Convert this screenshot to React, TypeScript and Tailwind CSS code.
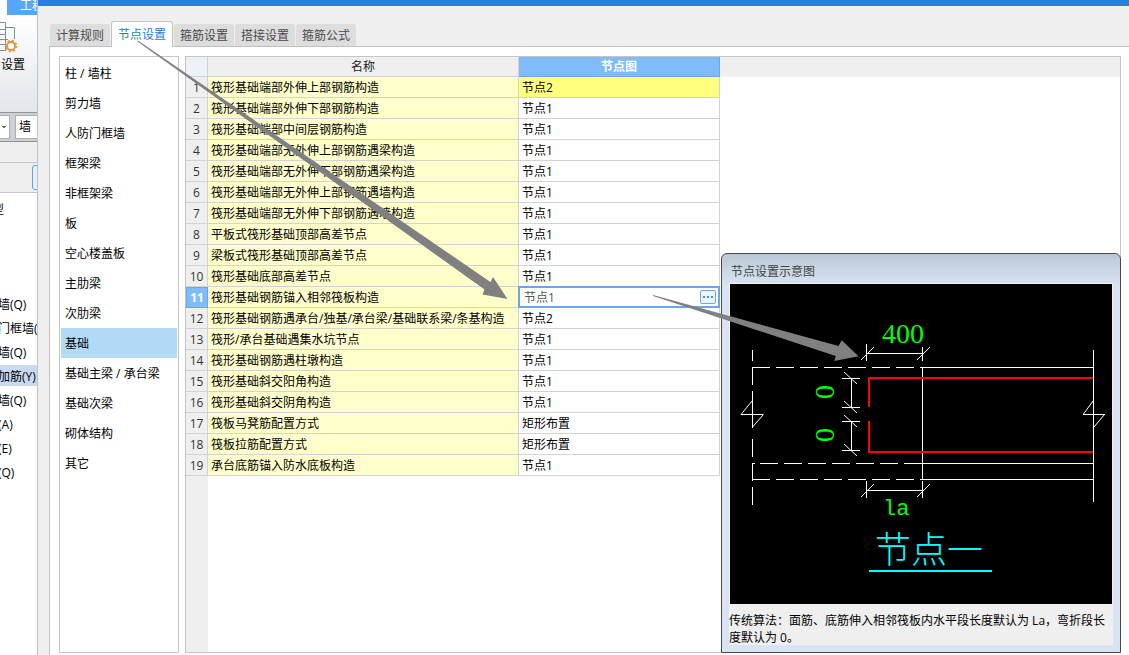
import React from "react";
import { ChevronDown } from "lucide-react";

const tabs = ["计算规则", "节点设置", "箍筋设置", "搭接设置", "箍筋公式"];

const categories = [
  "柱 / 墙柱",
  "剪力墙",
  "人防门框墙",
  "框架梁",
  "非框架梁",
  "板",
  "空心楼盖板",
  "主肋梁",
  "次肋梁",
  "基础",
  "基础主梁 / 承台梁",
  "基础次梁",
  "砌体结构",
  "其它",
];

const rows: [string, string][] = [
  ["筏形基础端部外伸上部钢筋构造", "节点2"],
  ["筏形基础端部外伸下部钢筋构造", "节点1"],
  ["筏形基础端部中间层钢筋构造", "节点1"],
  ["筏形基础端部无外伸上部钢筋遇梁构造", "节点1"],
  ["筏形基础端部无外伸下部钢筋遇梁构造", "节点1"],
  ["筏形基础端部无外伸上部钢筋遇墙构造", "节点1"],
  ["筏形基础端部无外伸下部钢筋遇墙构造", "节点1"],
  ["平板式筏形基础顶部高差节点", "节点1"],
  ["梁板式筏形基础顶部高差节点", "节点1"],
  ["筏形基础底部高差节点", "节点1"],
  ["筏形基础钢筋锚入相邻筏板构造", "节点1"],
  ["筏形基础钢筋遇承台/独基/承台梁/基础联系梁/条基构造", "节点2"],
  ["筏形/承台基础遇集水坑节点", "节点1"],
  ["筏形基础钢筋遇柱墩构造", "节点1"],
  ["筏形基础斜交阳角构造", "节点1"],
  ["筏形基础斜交阴角构造", "节点1"],
  ["筏板马凳筋配置方式", "矩形布置"],
  ["筏板拉筋配置方式", "矩形布置"],
  ["承台底筋锚入防水底板构造", "节点1"],
];

const components = ["墙(Q)", "门框墙(", "墙(Q)", "加筋(Y)", "墙(Q)", "(A)", "(E)", "(Q)"];

function SettingsIcon() {
  return (
    <svg className="block" width="18" height="32" viewBox="0 0 18 32" fill="none">
      <path d="M0 1.5H5.5V29.5H0M0 8.5H5.5M0 13.5H5.5M0 18.5H5.5M0 23.5H5.5M5.5 6.5H14.5V18M5.5 18.5H8" stroke="#7f8f96" />
      <circle cx="11" cy="25" r="5.4" stroke="#e8903a" strokeWidth="1.6" strokeDasharray="2.12 2.12" />
      <circle cx="11" cy="25" r="4" fill="#fff" stroke="#e8903a" strokeWidth="1.8" />
    </svg>
  );
}

function MainWindow() {
  return (
    <aside className="flex w-[37px] shrink-0 flex-col overflow-hidden whitespace-nowrap bg-white">
      <div className="flex h-[15px] shrink-0 pl-[7px]">
        <div className="flex h-full flex-1 items-end overflow-hidden bg-[#58a6f9] pl-[13px] leading-[18px] text-white">
          工程
        </div>
      </div>
      <div className="flex h-[98px] shrink-0 flex-col border-b border-[#8f949b] bg-linear-to-b from-white to-[#e2e6ea] pt-[6px]">
        <SettingsIcon />
        <span className="mt-[3px] pl-px leading-[18px]">设置</span>
      </div>
      <div className="flex h-[29px] shrink-0 items-center gap-[5px] border-b border-[#8f949b] bg-[#cdd1d6]">
        <button
          aria-label="展开"
          className="flex h-[24px] w-[10px] shrink-0 items-center border border-l-0 border-[#a9afb8] bg-white"
        >
          <ChevronDown size={8} fill="#555" className="text-[#555]" />
        </button>
        <select
          aria-label="构件类型"
          className="h-[24px] w-[40px] shrink-0 appearance-none border border-[#a9afb8] bg-white pl-[3px]"
        >
          <option>墙</option>
        </select>
      </div>
      <div className="h-[21px] shrink-0 border-b border-[#c2c6cf] bg-[#efefef]" />
      <div className="flex h-[30px] shrink-0 items-center border-b border-[#c2c6cf] bg-[#efefef] pl-[32px]">
        <button aria-label="新建" className="h-[25px] w-[24px] shrink-0 rounded-[3px] border border-[#58a6f9] bg-[#e9f2fc]" />
      </div>
      <div className="-ml-[8px] mt-[8px] h-[92px] leading-[18px]">型</div>
      <ul>
        {components.map((c, i) => (
          <li key={i} className="h-[24px]">
            <button
              className={"block h-[21px] w-full pt-[2px] text-left leading-[19px] " + (i === 3 ? "bg-[#c9d9f1]" : "")}
            >
              <span className="-ml-[2px]">{c}</span>
            </button>
          </li>
        ))}
      </ul>
    </aside>
  );
}

function Tabs() {
  return (
    <div role="tablist" className="relative flex items-end gap-px pl-[12px] pt-[15px]">
      {tabs.map((t, i) => (
        <button
          key={t}
          role="tab"
          aria-selected={i === 1}
          className={
            i === 1
              ? "-mb-px h-[26px] rounded-t-[3px] border border-b-0 border-[#bfc3cc] bg-white px-[6px] pt-px text-[#1a7fe0]"
              : "h-[22px] rounded-t-[3px] bg-[#dddddd] px-[6px] pt-[2px] text-[#4a4a4a]"
          }
        >
          {t}
        </button>
      ))}
    </div>
  );
}

function Categories() {
  return (
    <nav className="w-[120px] shrink-0 border border-[#c3c5ca] bg-white p-px">
      {categories.map((c, i) => (
        <button
          key={c}
          className={"block h-[30px] w-full pl-[4px] pt-[2px] text-left " + (i === 9 ? "bg-[#b3daf5]" : "")}
        >
          {c}
        </button>
      ))}
    </nav>
  );
}

function NodeCell({ index, value }: { index: number; value: string }) {
  if (index === 10) {
    return (
      <td className="relative border-b border-r border-[#d3d3d3] p-0">
        <div className="absolute -inset-px flex items-center border-2 border-[#69a7e8] bg-white pl-[4px] pr-[2px]">
          <input aria-label="节点图" defaultValue={value} className="min-w-0 flex-1 pt-[2px] text-[#555] outline-none" />
          <button
            aria-label="选择节点"
            className="flex h-[14px] w-[16px] items-center justify-center gap-[2px] rounded-[2px] border border-[#69a7e8] bg-[#edf5fd]"
          >
            <i className="size-[2px] bg-[#3f8fe0]" />
            <i className="size-[2px] bg-[#3f8fe0]" />
            <i className="size-[2px] bg-[#3f8fe0]" />
          </button>
        </div>
      </td>
    );
  }
  return (
    <td
      className={
        "border-b border-r border-[#d3d3d3] pb-0 pl-[3px] pr-0 pt-[2px] " + (index === 0 ? "bg-[#ffff80]" : "")
      }
    >
      {value}
    </td>
  );
}

function NodeTable() {
  return (
    <table className="w-full table-fixed border-separate border-spacing-0 whitespace-nowrap">
      <colgroup>
        <col className="w-[22px]" />
        <col className="w-[311px]" />
        <col className="w-[201px]" />
        <col />
      </colgroup>
      <thead>
        <tr className="h-[20px]">
          <th className="border-b border-r border-[#d3d3d3] bg-[#edf1f8] p-0" />
          <th className="border-b border-r border-[#d3d3d3] bg-[#efefef] p-0 pt-px font-normal text-[#222]">名称</th>
          <th className="border-b border-r border-[#69a7e8] bg-[#80bbfb] p-0 pt-px font-bold text-white">节点图</th>
          <th className="bg-[#efefef] p-0" />
        </tr>
      </thead>
      <tbody>
        {rows.map(([name, node], i) => (
          <tr key={i} className="h-[21px]">
            <th
              scope="row"
              className={
                i === 10
                  ? "border border-[#69a7e8] bg-[#80bbfb] p-0 font-bold text-white"
                  : "border-b border-r border-[#d3d3d3] bg-[#efefef] p-0 pt-[2px] font-normal text-[#333]"
              }
            >
              {i + 1}
            </th>
            <td className="border-b border-r border-[#d3d3d3] bg-[#ffffcc] pb-0 pl-[3px] pr-0 pt-[2px]">{name}</td>
            <NodeCell index={i} value={node} />
            <td className="p-0" />
          </tr>
        ))}
      </tbody>
    </table>
  );
}

function NodeDrawing() {
  return (
    <svg className="block h-[320px] w-full bg-black" viewBox="730 284 382 320" fill="none">
      <g stroke="#fff" shapeRendering="crispEdges">
        <path d="M752.5 350V361M752.5 367V385M752.5 391V428M752.5 439V457M752.5 463V481M752.5 487V505" />
        <path d="M752 367.5H923M752 479.5H923" strokeDasharray="18 6" />
        <path d="M752 463.5H755M760 463.5H923" strokeDasharray="18 6" />
        <path d="M920 367.5H1093M920 463.5H1093M920 479.5H1093M922.5 367V479" />
        <path d="M1093.5 350V502" />
        <path d="M866.5 344V361M922.5 347V361M866 353.5H922M866.5 481V498M922.5 481V498M866 490.5H922" />
        <path d="M842 378.5H860M842 407.5H860M851.5 378V407M842 421.5H860M842 450.5H860M851.5 421V450" />
        <path d="M741 414.5H763M1083 414.5H1105" />
      </g>
      <g stroke="#fff">
        <path d="M752.5 400.5L741 414.5M763.5 414.5L752.5 427M1093 401L1083.5 414M1104.5 414.5L1094 427" />
        <path d="M861 360L874 347M917 360L930 347M861 497L874 484M917 497L930 484" />
        <path d="M844 372L857 384M844 401L857 413M844 415L857 427M844 444L857 456" />
      </g>
      <path d="M869 407V378H1093M869 421V452H1093" stroke="#f00" strokeWidth="2" />
      <g fill="#0f0" fontFamily="'Liberation Serif', serif" fontSize="28">
        <text x="882" y="343">400</text>
        <text transform="translate(834 399) rotate(-90)">0</text>
        <text transform="translate(834 442) rotate(-90)">0</text>
        <text x="883" y="515" fontFamily="'Liberation Mono', monospace" fontSize="22">la</text>
      </g>
      <text x="875" y="563" fill="#0ff" fontSize="36" fontWeight="300" fontFamily="'Noto Sans CJK SC', sans-serif">
        节点一
      </text>
      <path d="M869 571H992" stroke="#0ff" strokeWidth="2" />
    </svg>
  );
}

function DiagramWindow() {
  return (
    <section className="absolute left-[535px] top-[196px] w-[400px] rounded-t-[6px] border border-[#45484d] bg-linear-to-b from-[#bac8d6] from-0% to-[#d8e4f1] to-8% px-[7px] pb-[7px]">
      <h2 className="h-[29px] pl-[2px] pt-[9px] leading-[18px] text-[#444]">节点设置示意图</h2>
      <div className="border border-[#f2f2f2] bg-[#efefef]">
        <NodeDrawing />
        <p className="-ml-px h-[40px] pt-[8px] leading-[17px]">
          传统算法：面筋、底筋伸入相邻筏板内水平段长度默认为 La，弯折段长度默认为 0。
        </p>
      </div>
    </section>
  );
}

function Arrows() {
  return (
    <svg className="pointer-events-none absolute left-0 top-0" width="880" height="380" viewBox="0 0 880 380" fill="#808080">
      <path d="M138 40.5L490.5 282L493 277L507.500 299L482.500 294.500L484.500 289.500L137.500 41.500Z" />
      <path d="M653 295L838.500 346L841.700 340.300L858.500 356.300L834.300 361L835.700 356L653 296Z" />
    </svg>
  );
}

export default function App() {
  return (
    <div className="relative flex min-h-screen overflow-hidden bg-white font-['Open_Sans','Noto_Sans_CJK_SC',sans-serif] text-[12px] leading-[18px] text-black">
      <MainWindow />
      <main className="flex min-w-0 flex-1 flex-col border-l border-[#b9c3d3] bg-[#efefef]">
        <div className="h-[6px] shrink-0 bg-[#2b7de1]" />
        <Tabs />
        <div className="ml-[11px] flex flex-1 gap-[6px] border-l border-t border-[#bfc1c7] bg-white pb-[2px] pl-[9px] pr-[8px] pt-[9px]">
          <Categories />
          <div className="relative flex min-w-0 flex-1 flex-col border border-[#c3c5ca]">
            <NodeTable />
            <div className="w-[22px] flex-1 bg-[#efefef]" />
            <DiagramWindow />
          </div>
        </div>
      </main>
      <Arrows />
    </div>
  );
}
